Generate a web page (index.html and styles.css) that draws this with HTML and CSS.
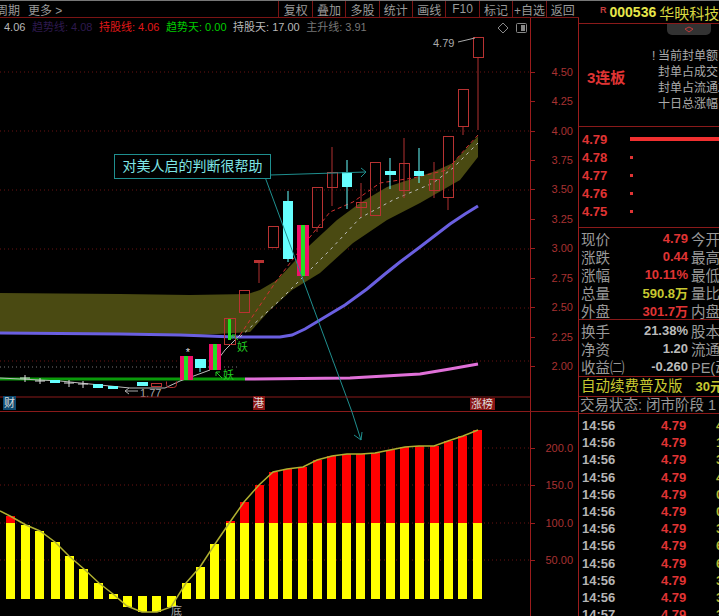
FILE: index.html
```html
<!DOCTYPE html>
<html lang="zh-CN">
<head>
  <meta charset="UTF-8" />
  <title>000536 华映科技</title>
  <link rel="stylesheet" href="styles.css">
</head>
<body>
<div class="app">
  <div class="charts">
    <nav class="toolbar">
      <span class="tool-left period">周期</span>
      <span class="tool-left">更多 &gt;</span>
      <div class="tool-buttons">
        <span>复权</span><span>叠加</span><span>多股</span><span>统计</span><span>画线</span><span>F10</span><span>标记</span><span>+自选</span><span>返回</span>
      </div>
    </nav>

    <section class="pane pane-main">
      <div class="legend">
        <span class="lg-white">4.06</span>
        <span class="lg-purple">趋势线: 4.08</span>
        <span class="lg-red">持股线: 4.06</span>
        <span class="lg-green">趋势天: 0.00</span>
        <span class="lg-white">持股天: 17.00</span>
        <span class="lg-gray">主升线: 3.91</span>
      </div>
      <div class="note">对美人启的判断很帮助</div>

      <svg class="plot" width="530" height="394" viewBox="0 18 530 394">
        <!-- grid -->
        <g class="grid">
          <line x1="0" y1="72" x2="530" y2="72"/>
          <line x1="0" y1="131" x2="530" y2="131"/>
          <line x1="0" y1="190" x2="530" y2="190"/>
          <line x1="0" y1="249" x2="530" y2="249"/>
          <line x1="0" y1="308" x2="530" y2="308"/>
          <line x1="0" y1="361" x2="530" y2="361"/>
          <line class="grid-gray" x1="0" y1="367" x2="240" y2="367"/>
        </g>

        <!-- channel between the trend lines -->
        <polygon class="band" points="0,293 120,294 190,295 248,294 260,290 277,280 310,245 337,220 360,203 387,187 433,172 453,163 478,136 478,157 460,180 420,203 387,220 353,243 320,273 292,290 270,310 250,332 200,335 120,334 0,333"/>
        <polyline class="line-blue" points="0,333 120,334 180,335 235,337 280,337 292,335 305,329 320,320 345,305 367,289 385,274 400,262 420,247 450,224 465,214 478,206"/>
        <polyline class="line-green" points="0,379 245,379"/>
        <polyline class="line-pink" points="245,379 350,378 420,374 450,369 478,364"/>
        <polyline class="dash-red" points="240,335 277,280 310,237 330,212 353,202 380,183 413,178 447,170 467,147 478,135"/>
        <polyline class="dash-white" points="240,337 280,300 303,277 330,250 360,218 393,200 433,183 453,168 478,143"/>
        <polyline class="line-white" points="0,378 60,381 130,388 165,388 180,381 210,370 225,350 240,335"/>

        <!-- small candles on the left -->
        <g class="cyan">
          <rect x="50" y="380" width="10" height="3"/>
          <rect x="93" y="384" width="10" height="4"/>
          <rect x="108" y="386" width="10" height="3"/>
          <rect x="137" y="382" width="11" height="4"/>
          <rect x="195" y="359" width="11" height="9"/>
          <rect x="283" y="201" width="10" height="58"/>
          <rect x="342" y="172" width="10" height="15"/>
          <rect x="385" y="171" width="11" height="4"/>
          <rect x="414" y="171" width="10" height="5"/>
        </g>
        <g class="wick-cyan">
          <line x1="200" y1="368" x2="200" y2="372"/>
          <line x1="288" y1="191" x2="288" y2="262"/>
          <line x1="347" y1="160" x2="347" y2="209"/>
          <line x1="390" y1="158" x2="390" y2="189"/>
          <line x1="419" y1="148" x2="419" y2="183"/>
        </g>
        <g class="tick-white">
          <path d="M20 378h10M25 375v7M35 381h10M40 378v6M64 383h10M69 380v7M78 384h10M83 381v7"/>
        </g>

        <!-- hollow candles -->
        <g class="wick-red">
          <line x1="259" y1="263" x2="259" y2="283"/>
          <line x1="317" y1="227" x2="317" y2="232"/>
          <line x1="332" y1="147" x2="332" y2="206"/>
          <line x1="361" y1="183" x2="361" y2="217"/>
          <line x1="404" y1="138" x2="404" y2="198"/>
          <line x1="434" y1="162" x2="434" y2="198"/>
          <line x1="448" y1="197" x2="448" y2="210"/>
          <line x1="463" y1="126" x2="463" y2="135"/>
          <line x1="478" y1="57" x2="478" y2="130"/>
        </g>
        <g class="hollow">
          <rect x="151.5" y="383.5" width="10" height="3"/>
          <rect x="224.5" y="318.5" width="11" height="26"/>
          <rect x="239.5" y="290.5" width="10" height="22"/>
          <rect x="268.5" y="226.5" width="10" height="21"/>
          <rect x="312.5" y="187.5" width="10" height="40"/>
          <rect x="327.5" y="172.5" width="10" height="15"/>
          <rect x="356.5" y="202.5" width="10" height="5"/>
          <rect x="370.5" y="162.5" width="10" height="53"/>
          <rect x="399.5" y="163.5" width="10" height="27"/>
          <rect x="429.5" y="179.5" width="10" height="11"/>
          <rect x="443.5" y="136.5" width="10" height="61"/>
          <rect x="458.5" y="89.5" width="10" height="37"/>
          <rect x="473.5" y="37.5" width="10" height="20"/>
        </g>
        <rect class="solid-red" x="254" y="260" width="10" height="3"/>
        <path class="hollow" d="M166.5 381.5v3a3 3 0 0 0 3 3h4a3 3 0 0 0 3-3v-3"/>

        <!-- limit-up candles -->
        <g class="pink">
          <rect x="180" y="356" width="13" height="24"/>
          <rect x="209" y="344" width="12" height="26"/>
          <rect x="297" y="225" width="12" height="51"/>
        </g>
        <g class="green">
          <rect x="184" y="356" width="4" height="24"/>
          <rect x="213" y="344" width="4" height="26"/>
          <rect x="228" y="319" width="3" height="21"/>
          <rect x="301" y="225" width="4" height="51"/>
        </g>

        <!-- marks -->
        <text class="mark-star" x="188" y="356">*</text>
        <text class="mark-gray" x="433" y="47">4.79</text>
        <line class="pointer" x1="458" y1="42" x2="475" y2="38"/>
        <text class="mark-gray" x="140" y="397">1.77</text>
        <path class="pointer" d="M125 391h13M129 388l-4 3 4 3"/>
        <text class="mark-green" x="237" y="351">妖</text>
        <path class="pointer-green" d="M238 340l-6-5m0 4v-4h4"/>
        <text class="mark-green" x="223" y="379">妖</text>
        <path class="pointer-green" d="M222 378l-6-6m0 4v-4h4"/>
        <path class="outline" d="M503 23l5 5-5 5-5-5z"/>
        <rect class="outline" x="516.5" y="23.5" width="10" height="9" rx="1"/>
        <rect class="icon-fill" x="521" y="25" width="4" height="6"/>

        <!-- arrows out of the note -->
        <g class="arrow">
          <line x1="270" y1="175" x2="366" y2="172"/>
          <path d="M361 168l5 4-5 5"/>
          <line x1="265" y1="177" x2="352" y2="412"/>
        </g>

        <!-- info strip -->
        <line class="strip" x1="0" y1="397" x2="530" y2="397"/>
        <rect class="badge-blue" x="3" y="396" width="13" height="14"/>
        <text class="badge-text" x="4" y="407">财</text>
        <rect class="badge-red" x="253" y="396" width="12" height="14"/>
        <text class="badge-text" x="253" y="407">港</text>
        <rect class="badge-red" x="470" y="398" width="25" height="12"/>
        <text class="badge-text" x="471" y="408">涨榜</text>
      </svg>

      <div class="axis axis-main">
        <span>4.50</span><span>4.25</span><span>4.00</span><span>3.75</span><span>3.50</span><span>3.25</span><span>3.00</span><span>2.75</span><span>2.50</span><span>2.25</span><span>2.00</span>
      </div>
    </section>

    <section class="pane pane-sub">
      <svg class="plot" width="530" height="204" viewBox="0 412 530 204">
        <g class="grid">
          <line x1="0" y1="448" x2="530" y2="448"/>
          <line x1="0" y1="485" x2="530" y2="485"/>
          <line x1="0" y1="523" x2="530" y2="523"/>
          <line x1="0" y1="560" x2="530" y2="560"/>
        </g>
        <g class="bar-red">
          <rect x="6" y="516" width="9" height="7"/>
          <rect x="226" y="521" width="9" height="2"/>
          <rect x="240" y="502" width="9" height="21"/>
          <rect x="255" y="485" width="9" height="38"/>
          <rect x="269" y="472" width="9" height="51"/>
          <rect x="283" y="469" width="9" height="54"/>
          <rect x="298" y="467" width="9" height="56"/>
          <rect x="313" y="460" width="9" height="63"/>
          <rect x="327" y="456" width="9" height="67"/>
          <rect x="342" y="454" width="9" height="69"/>
          <rect x="356" y="454" width="9" height="69"/>
          <rect x="371" y="453" width="9" height="70"/>
          <rect x="386" y="450" width="9" height="73"/>
          <rect x="400" y="447" width="9" height="76"/>
          <rect x="415" y="446" width="9" height="77"/>
          <rect x="430" y="446" width="9" height="77"/>
          <rect x="444" y="441" width="9" height="82"/>
          <rect x="458" y="436" width="9" height="87"/>
          <rect x="473" y="430" width="9" height="93"/>
        </g>
        <g class="bar-yellow">
          <rect x="6" y="523" width="9" height="76"/>
          <rect x="21" y="525" width="9" height="74"/>
          <rect x="35" y="531" width="9" height="68"/>
          <rect x="51" y="542" width="9" height="57"/>
          <rect x="65" y="556" width="9" height="43"/>
          <rect x="79" y="569" width="9" height="30"/>
          <rect x="94" y="583" width="9" height="16"/>
          <rect x="109" y="594" width="9" height="5"/>
          <rect x="123" y="596" width="9" height="11"/>
          <rect x="138" y="596" width="9" height="16"/>
          <rect x="152" y="596" width="9" height="16"/>
          <rect x="167" y="596" width="9" height="11"/>
          <rect x="182" y="583" width="9" height="16"/>
          <rect x="196" y="567" width="9" height="32"/>
          <rect x="210" y="544" width="9" height="55"/>
          <rect x="226" y="523" width="9" height="76"/>
          <rect x="240" y="523" width="9" height="76"/>
          <rect x="255" y="523" width="9" height="76"/>
          <rect x="269" y="523" width="9" height="76"/>
          <rect x="283" y="523" width="9" height="76"/>
          <rect x="298" y="523" width="9" height="76"/>
          <rect x="313" y="523" width="9" height="76"/>
          <rect x="327" y="523" width="9" height="76"/>
          <rect x="342" y="523" width="9" height="76"/>
          <rect x="356" y="523" width="9" height="76"/>
          <rect x="371" y="523" width="9" height="76"/>
          <rect x="386" y="523" width="9" height="76"/>
          <rect x="400" y="523" width="9" height="76"/>
          <rect x="415" y="523" width="9" height="76"/>
          <rect x="430" y="523" width="9" height="76"/>
          <rect x="444" y="523" width="9" height="76"/>
          <rect x="458" y="523" width="9" height="76"/>
          <rect x="473" y="523" width="9" height="76"/>
        </g>
        <polyline class="line-olive" points="0,511 10,516 26,525 40,531 55,542 69,556 84,569 99,583 113,594 127,606 142,612 157,612 171,607 186,583 200,567 215,544 230,522 244,502 259,485 273,472 287,469 303,467 317,460 332,456 347,454 361,454 375,453 390,450 405,447 419,446 434,446 448,441 463,436 478,430"/>
        <text class="mark-gray" x="171" y="615">底</text>

        <!-- tail of the note's long arrow -->
        <g class="arrow">
          <line x1="352" y1="412" x2="361" y2="440"/>
          <path d="M354 435l7 5 1-8"/>
        </g>
      </svg>

      <div class="axis axis-sub">
        <span>200.0</span><span>150.0</span><span>100.0</span><span>50.00</span>
      </div>
    </section>
  </div>

  <aside class="side">
    <header class="stock">
      <span class="stock-r">R</span>
      <span class="stock-code">000536</span>
      <span class="stock-name">华映科技</span>
    </header>

    <section class="seal">
      <div class="seal-tab">
        <svg width="10" height="7" viewBox="0 0 10 7"><path d="M1 3l4-2 4 2-4 3z" fill="none" stroke="#c23c3c"/></svg>
      </div>
      <div class="seal-title">3连板</div>
      <ul class="seal-list">
        <li><span class="seal-flag">!</span>当前封单额</li>
        <li>封单占成交</li>
        <li>封单占流通Z</li>
        <li>十日总涨幅</li>
      </ul>
    </section>

    <section class="orders">
      <div class="order"><b>4.79</b><i class="order-bar"></i></div>
      <div class="order"><b>4.78</b><i class="order-dot"></i></div>
      <div class="order"><b>4.77</b><i class="order-dot"></i></div>
      <div class="order"><b>4.76</b><i class="order-dot"></i></div>
      <div class="order"><b>4.75</b><i class="order-dot"></i></div>
    </section>

    <section class="stats">
      <div class="stat"><span>现价</span><b class="val-red">4.79</b><span>今开</span></div>
      <div class="stat"><span>涨跌</span><b class="val-red">0.44</b><span>最高</span></div>
      <div class="stat"><span>涨幅</span><b class="val-red">10.11%</b><span>最低</span></div>
      <div class="stat"><span>总量</span><b class="val-yellow">590.8万</b><span>量比</span></div>
      <div class="stat"><span>外盘</span><b class="val-red">301.7万</b><span>内盘</span></div>
    </section>

    <section class="stats stats-two">
      <div class="stat"><span>换手</span><b class="val-gray">21.38%</b><span>股本</span></div>
      <div class="stat"><span>净资</span><b class="val-gray">1.20</b><span>流通</span></div>
      <div class="stat"><span>收益㈡</span><b class="val-gray">-0.260</b><span>PE(动</span></div>
    </section>

    <div class="promo">自动续费普及版 <b>30元</b></div>
    <div class="status">交易状态: 闭市阶段 1</div>

    <section class="ticks">
      <div class="tick"><span>14:56</span><b>4.79</b><em>4</em></div>
      <div class="tick"><span>14:56</span><b>4.79</b><em>1</em></div>
      <div class="tick"><span>14:56</span><b>4.79</b><em>3</em></div>
      <div class="tick"><span>14:56</span><b>4.79</b><em>4</em></div>
      <div class="tick"><span>14:56</span><b>4.79</b><em>0</em></div>
      <div class="tick"><span>14:56</span><b>4.79</b><em>0</em></div>
      <div class="tick"><span>14:56</span><b>4.79</b><em>3</em></div>
      <div class="tick"><span>14:56</span><b>4.79</b><em>6</em></div>
      <div class="tick"><span>14:56</span><b>4.79</b><em>6</em></div>
      <div class="tick"><span>14:56</span><b>4.79</b><em>3</em></div>
      <div class="tick"><span>14:56</span><b>4.79</b><em>3</em></div>
      <div class="tick"><span>14:57</span><b>4.79</b><em>3</em></div>
    </section>
  </aside>
</div>
</body>
</html>
```

FILE: styles.css
```css
* {
  box-sizing: border-box;
}
html, body {
  margin: 0;
  padding: 0;
  background: #000;
}
body {
  font-family: "Liberation Sans", "Noto Sans CJK SC", sans-serif;
  color: #aaa;
  overflow: hidden;
}
.app {
  display: flex;
  width: 719px;
  height: 616px;
  overflow: hidden;
  background: #000;
  border-top: 1px solid #777;
}

/* left column */
.charts {
  width: 579px;
  flex: none;
  display: flex;
  flex-direction: column;
}
.toolbar {
  height: 17px;
  flex: none;
  display: flex;
  align-items: center;
  border-bottom: 1px solid #7a1414;
  font-size: 12px;
  color: #999;
}
.tool-left {
  margin-right: 8px;
  white-space: nowrap;
}
.period {
  margin-left: -4px;
}
.tool-buttons {
  margin-left: auto;
  display: flex;
  height: 100%;
}
.tool-buttons span {
  width: 33.4px;
  display: flex;
  align-items: center;
  justify-content: center;
  border-left: 1px solid #7a1414;
  white-space: nowrap;
}
.pane {
  display: flex;
  position: relative;
  flex: none;
}
.pane-main {
  height: 394px;
  border-bottom: 1px solid #8a1a1a;
}
.pane-sub {
  height: 204px;
}
.plot {
  display: block;
  flex: none;
}
.axis {
  width: 49px;
  flex: none;
  display: flex;
  flex-direction: column;
  border-left: 1px solid #9a1c1c;
  border-right: 1px solid #9a1c1c;
  font-size: 11px;
  color: #a83232;
  text-align: right;
}
.axis span {
  position: relative;
  display: flex;
  align-items: center;
  justify-content: flex-end;
  padding-right: 5px;
}
.axis span::before {
  content: "";
  position: absolute;
  left: 0;
  top: 50%;
  width: 4px;
  border-top: 1px solid #9a1c1c;
}
.axis-main {
  padding-top: 39px;
}
.axis-main span {
  height: 29.45px;
}
.axis-sub {
  padding-top: 17px;
}
.axis-sub span {
  height: 37.5px;
}

/* legend above the candles */
.legend {
  position: absolute;
  left: 4px;
  top: 2px;
  display: flex;
  gap: 6.5px;
  font-size: 11px;
  line-height: 14px;
  white-space: nowrap;
}
.lg-white { color: #b8b8b8; }
.lg-purple { color: #2e1a4e; }
.lg-red { color: #e01818; }
.lg-green { color: #0c0; }
.lg-gray { color: #777; }

.note {
  position: absolute;
  left: 114px;
  top: 136px;
  width: 157px;
  height: 25px;
  border: 1px solid #1f8f8f;
  background: #000;
  color: #7fe6e6;
  font-size: 14px;
  line-height: 23px;
  text-align: center;
  white-space: nowrap;
  z-index: 1;
}

/* svg drawing */
.grid line {
  stroke: #6b1212;
  stroke-width: 1;
  stroke-dasharray: 1 3;
}
.grid .grid-gray {
  stroke: #777;
}
.band { fill: #4a4a12; }
.line-blue { fill: none; stroke: #6a5fe0; stroke-width: 3; }
.line-green { fill: none; stroke: #0a9a0a; stroke-width: 3; }
.line-pink { fill: none; stroke: #e070d8; stroke-width: 3; }
.line-white { fill: none; stroke: #bbb; stroke-width: 1; }
.line-olive { fill: none; stroke: #b0b030; stroke-width: 1.5; }
.dash-red { fill: none; stroke: #d03030; stroke-width: 1; stroke-dasharray: 4 3; }
.dash-white { fill: none; stroke: #bbb; stroke-width: 1; stroke-dasharray: 3 4; }
.cyan rect { fill: #66ffff; shape-rendering: crispEdges; }
.wick-cyan line { stroke: #66ffff; }
.wick-red line { stroke: #b03030; }
.tick-white path { stroke: #ddd; fill: none; }
.hollow, .hollow rect { fill: none; stroke: #b83232; }
.solid-red { fill: #b83232; }
.pink rect { fill: #f0106a; shape-rendering: crispEdges; }
.green rect { fill: #22e022; shape-rendering: crispEdges; }
.mark-star { fill: #ddd; font-size: 11px; text-anchor: middle; }
.mark-gray { fill: #aaa; font-size: 11px; }
.mark-green { fill: #22cc22; font-size: 11px; }
.pointer { fill: none; stroke: #aaa; }
.pointer-green { fill: none; stroke: #22cc22; }
.outline { fill: none; stroke: #888; }
.icon-fill { fill: #888; }
.arrow line, .arrow path { fill: none; stroke: #1f8f8f; }
.strip { stroke: #8a1a1a; }
.badge-blue { fill: #0e4a70; }
.badge-red { fill: #8a1414; }
.badge-text { fill: #ddd; font-size: 11px; }
.bar-red rect { fill: #f00; shape-rendering: crispEdges; }
.bar-yellow rect { fill: #ff0; shape-rendering: crispEdges; }

/* right column */
.side {
  flex: 1;
  min-width: 0;
  display: flex;
  flex-direction: column;
  overflow: hidden;
  white-space: nowrap;
}
.side > * {
  flex: none;
}
.stock {
  height: 23px;
  display: flex;
  align-items: center;
  padding-left: 21px;
  border-bottom: 1px solid #8a1a1a;
}
.stock-r {
  font-size: 9px;
  font-weight: bold;
  color: #c23c3c;
  margin: -5px 3px 0 0;
}
.stock-code {
  font-size: 14px;
  font-weight: bold;
  color: #e6e64a;
  margin-right: 3px;
}
.stock-name {
  font-size: 15px;
  color: #d6d640;
}
.seal {
  height: 103px;
  position: relative;
  display: flex;
  align-items: center;
  padding-top: 10px;
  border-bottom: 1px solid #8a1a1a;
}
.seal-tab {
  position: absolute;
  left: 88px;
  top: 0;
  width: 44px;
  height: 11px;
  display: flex;
  justify-content: center;
  align-items: center;
  background: #333;
  border-radius: 0 0 5px 5px;
}
.seal-title {
  flex: none;
  width: 75px;
  padding: 0 0 8px 8px;
  font-size: 15px;
  font-weight: bold;
  color: #e03434;
}
.seal-list {
  list-style: none;
  margin: 0;
  padding: 0;
  font-size: 12px;
  line-height: 16px;
  color: #aaa;
}
.seal-list li {
  position: relative;
  padding-left: 4px;
}
.seal-flag {
  position: absolute;
  left: -2px;
}
.orders {
  height: 101px;
  padding: 3px 0 0 3px;
  border-bottom: 1px solid #8a1a1a;
}
.order {
  height: 18px;
  display: flex;
  align-items: center;
  font-size: 13px;
  color: #e03434;
}
.order b {
  width: 48px;
}
.order-bar {
  flex: 1;
  height: 4px;
  background: #f03030;
}
.order-dot {
  width: 3px;
  height: 3px;
  background: #e03434;
}
.stats {
  height: 92px;
  padding-left: 2px;
  border-bottom: 1px solid #8a1a1a;
}
.stats-two {
  height: 57px;
}
.stat {
  height: 18px;
  padding-bottom: 3px;
  display: grid;
  grid-template-columns: 36px 68px auto;
  column-gap: 3px;
  align-items: center;
  font-size: 14.5px;
  color: #999;
}
.stat b {
  font-size: 13px;
  text-align: right;
}
.val-red { color: #e03434; }
.val-yellow { color: #c8c830; }
.val-gray { color: #bbb; }
.promo {
  height: 20px;
  padding-left: 2px;
  border-bottom: 1px solid #8a1a1a;
  font-size: 14.5px;
  line-height: 19px;
  color: #c8c830;
}
.promo b {
  font-size: 13px;
  margin-left: 9px;
}
.status {
  height: 17px;
  padding-left: 1px;
  border-bottom: 1px solid #8a1a1a;
  font-size: 14.5px;
  line-height: 16px;
  color: #999;
}
.ticks {
  padding: 3px 0 0 3px;
}
.tick {
  height: 17.2px;
  display: grid;
  grid-template-columns: 79px 55px auto;
  align-items: center;
  font-size: 13px;
  font-weight: bold;
}
.tick span { color: #b4b4b4; }
.tick b { color: #e03434; }
.tick em { color: #b4b430; font-style: normal; }
```
